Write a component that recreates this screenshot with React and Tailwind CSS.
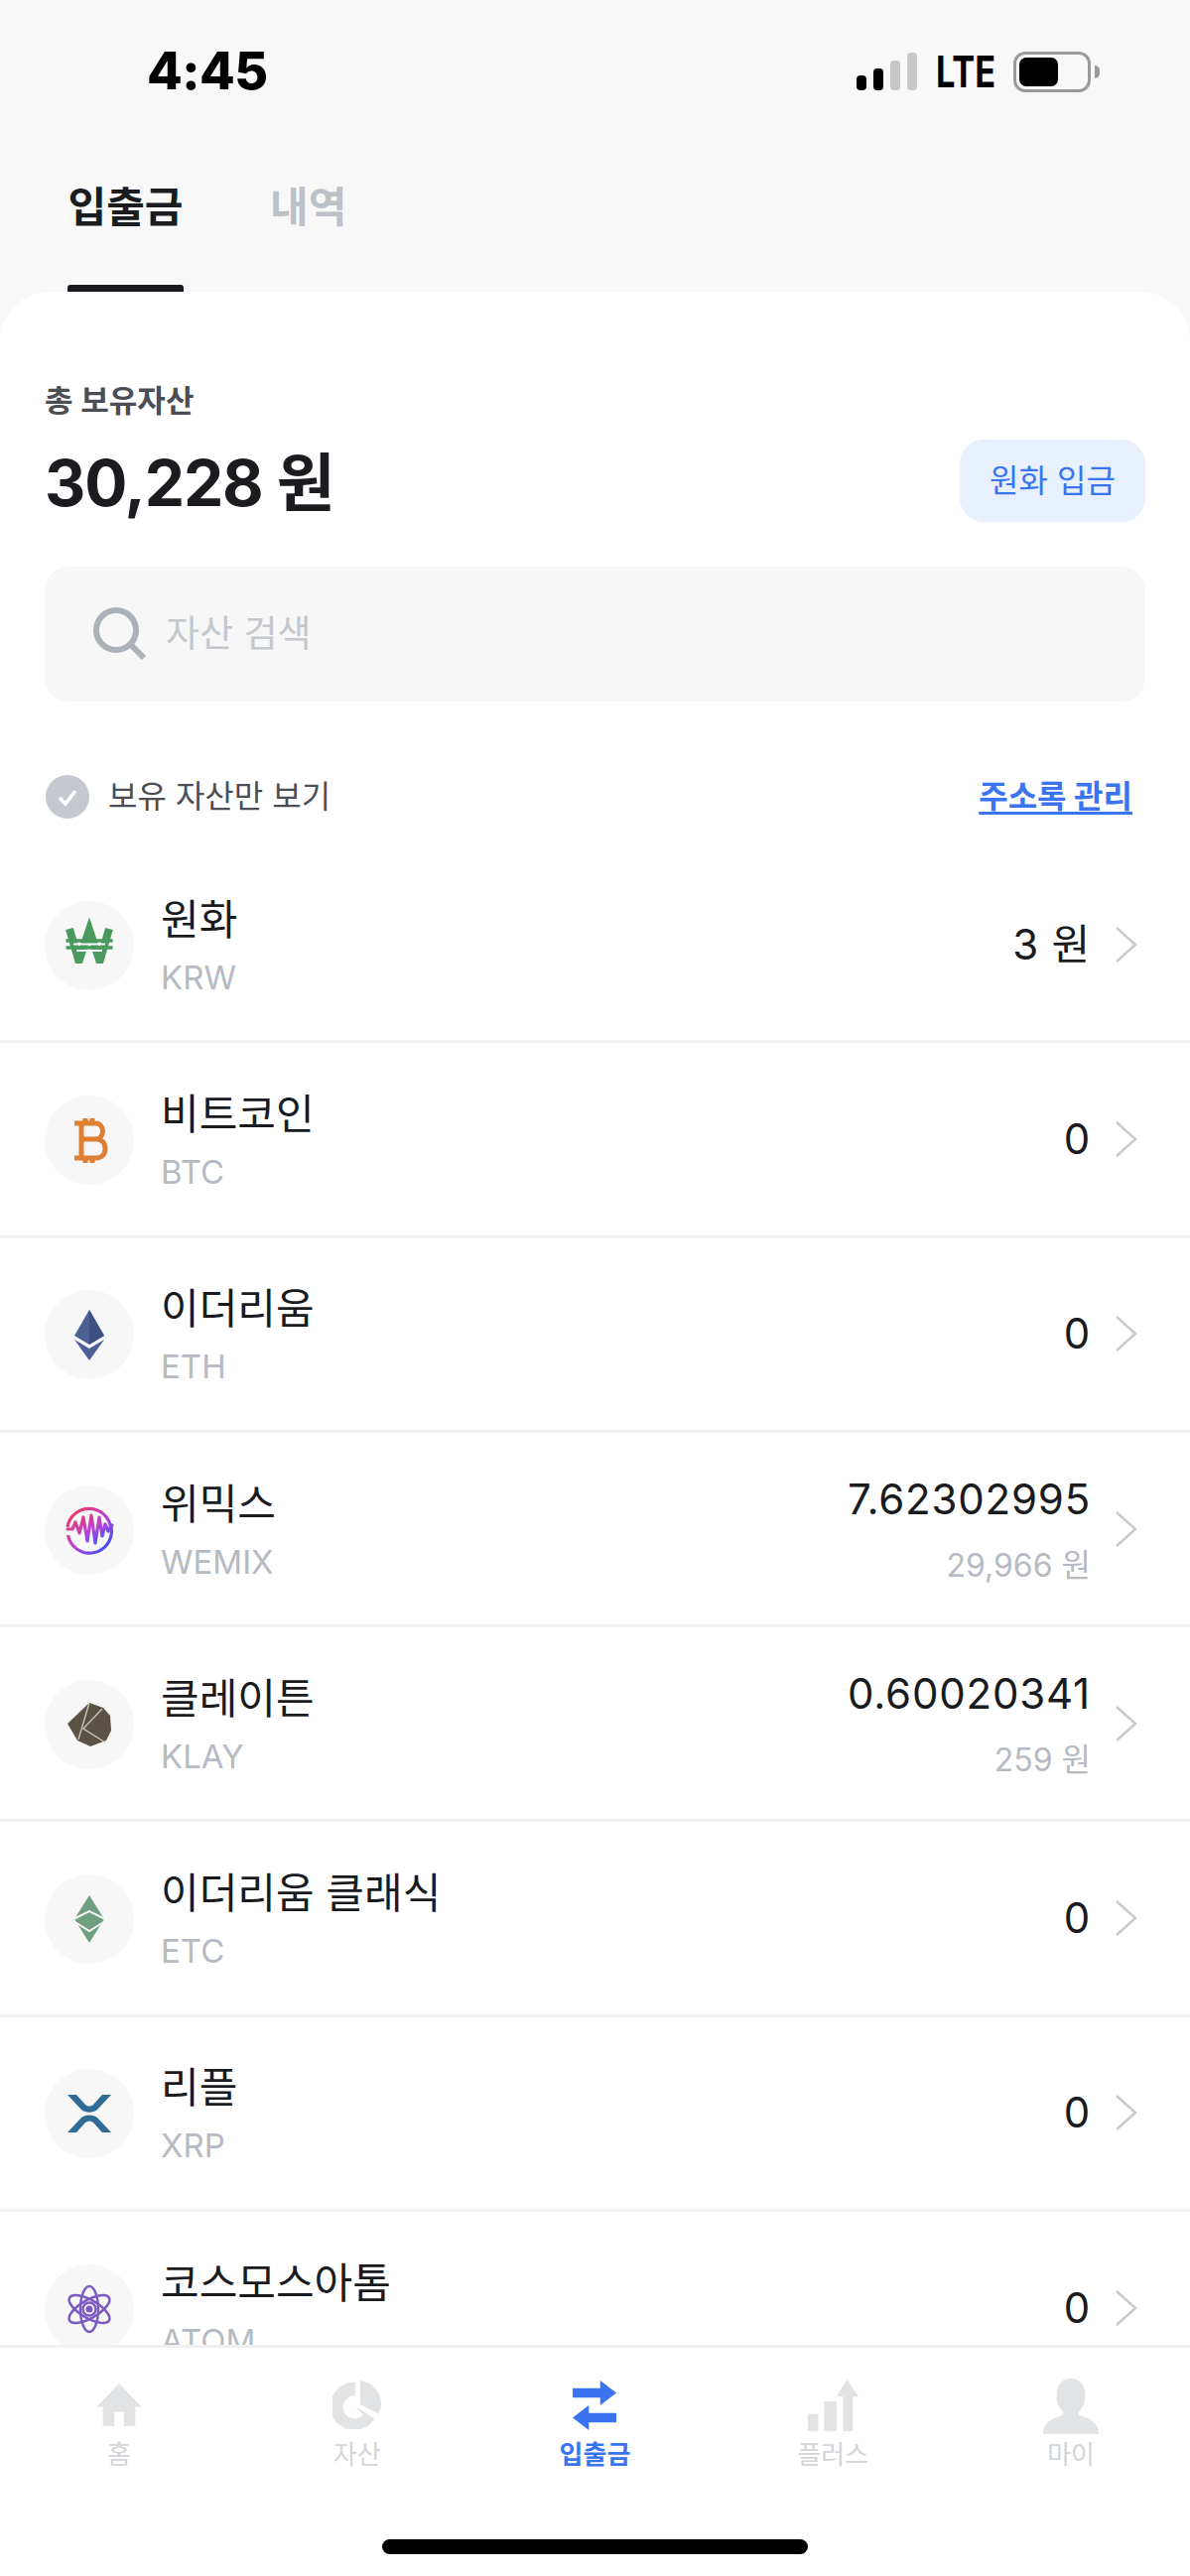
import React from 'react';

const FONT = 'font-["Inter","Noto_Sans_CJK_KR",sans-serif]';

const WonIcon = () => (
  <svg width="60" height="60" viewBox="0 0 60 60">
    <path d="M10 13l9 31h1l10-30 10 30h1l9-31" fill="none" stroke="#4a9a60" strokeWidth="8" />
    <path d="M14 28.500h32M17 35h26" stroke="#f7f7f7" strokeWidth="2" />
    <path d="M6.500 25h47M6.500 32h47" stroke="#4a9a60" strokeWidth="3.500" />
  </svg>
);

const BtcIcon = () => (
  <svg width="60" height="60" viewBox="0 0 60 60">
    <path
      d="M15 13h21c5 0 7.500 4 7.500 8s-2.500 8-7.500 8H22M15 48h22c5.500 0 9-4 9-9.500s-3.500-9.500-9-9.500M22 13v35M26 8v5M33 8v5M26 48v5M33 48v5"
      fill="none"
      stroke="#df7f31"
      strokeWidth="5"
    />
  </svg>
);

const EthIcon = () => (
  <svg width="60" height="60" viewBox="0 0 60 60">
    <path d="M30 5l15 26-15 9-15-9z" fill="#4d6096" />
    <path d="M15 35l15 9 15-9-15 21z" fill="#4d6096" />
    <path d="M30 5v35l15-9z" fill="#3e4f80" />
  </svg>
);

const WemixIcon = () => (
  <svg width="60" height="60" viewBox="0 0 60 60">
    <defs>
      <linearGradient id="wemixRing" x1="0" y1="0" x2="1" y2="1">
        <stop offset="10%" stopColor="#ee3a68" />
        <stop offset="55%" stopColor="#b543d8" />
        <stop offset="90%" stopColor="#3f52f0" />
      </linearGradient>
    </defs>
    <path
      d="M8 27a22 22 0 0 1 43.500 0M8.500 35a22 22 0 0 0 43.500-8"
      fill="none"
      stroke="url(#wemixRing)"
      strokeWidth="3.200"
    />
    <path
      d="M8 29h5l3-7 4 11 4-16 4 24 4-26 4 28 4-26 3 19 3-12 3 7 4-6"
      fill="none"
      stroke="url(#wemixRing)"
      strokeWidth="3.200"
      strokeLinejoin="round"
      strokeLinecap="round"
    />
  </svg>
);

const KlayIcon = () => (
  <svg width="60" height="60" viewBox="0 0 60 60">
    <path d="M30 8l14 5 7 8 1 15-5 10-16 6-13-6-10-17z" fill="#5a5345" />
    <path d="M30 8L19 45M43 14L24 34l22 14" fill="none" stroke="#c8c5bc" strokeWidth="1.400" />
  </svg>
);

const EtcIcon = () => (
  <svg width="60" height="60" viewBox="0 0 60 60">
    <path d="M30 6l15 24-15 24-15-24z" fill="#6f9f7e" />
    <path d="M14 30l16-8 16 8M14 32l16 10 16-10" fill="none" stroke="#f7f7f7" strokeWidth="2" />
  </svg>
);

const XrpIcon = () => (
  <svg width="60" height="60" viewBox="0 0 60 60">
    <path
      d="M8 11h9l9 10c2.500 2 5.500 2 8 0l9-10h9L38 26c-4.500 3.500-11.500 3.500-16 0zM8 49h9l9-10c2.500-2 5.500-2 8 0l9 10h9L38 34c-4.500-3.500-11.500-3.500-16 0z"
      fill="#2f6b94"
    />
  </svg>
);

const AtomIcon = () => (
  <svg width="60" height="60" viewBox="0 0 60 60" fill="none" stroke="#7c5cc0" strokeWidth="2.500">
    <ellipse cx="30" cy="30" rx="9" ry="23" />
    <ellipse cx="30" cy="30" rx="9" ry="23" transform="rotate(60 30 30)" />
    <ellipse cx="30" cy="30" rx="9" ry="23" transform="rotate(-60 30 30)" />
    <circle cx="30" cy="30" r="6.500" />
    <circle cx="30" cy="30" r="3.500" fill="#7c5cc0" stroke="none" />
  </svg>
);

const assets = [
  { name: '원화', code: 'KRW', value: '3 원', icon: WonIcon },
  { name: '비트코인', code: 'BTC', value: '0', icon: BtcIcon },
  { name: '이더리움', code: 'ETH', value: '0', icon: EthIcon },
  { name: '위믹스', code: 'WEMIX', value: '7.62302995', sub: '29,966 원', icon: WemixIcon },
  { name: '클레이튼', code: 'KLAY', value: '0.60020341', sub: '259 원', icon: KlayIcon },
  { name: '이더리움 클래식', code: 'ETC', value: '0', icon: EtcIcon },
  { name: '리플', code: 'XRP', value: '0', icon: XrpIcon },
  { name: '코스모스아톰', code: 'ATOM', value: '0', icon: AtomIcon },
];

function AssetRow({ asset }) {
  const Icon = asset.icon;
  return (
    <div className="flex h-[196.3px] shrink-0 items-center border-b-[3px] border-[#f2f2f3] pl-[45px] pr-[52px]">
      <div className="mt-[2px] flex h-[90px] w-[90px] shrink-0 items-center justify-center rounded-full bg-[#f7f7f7]">
        <Icon />
      </div>
      <div className="ml-[27px] flex flex-1 flex-col">
        <span className="text-[42px] leading-[56px] text-[#1a1b1e]">{asset.name}</span>
        <span className="mt-[10px] text-[33px] leading-[40px] text-[#b6bac2]">{asset.code}</span>
      </div>
      <div className="flex flex-col items-end">
        <span className="text-[42px] leading-[56px] tracking-[0.8px] text-[#1a1b1e]">{asset.value}</span>
        {asset.sub && <span className="mt-[19px] text-[32px] leading-[40px] text-[#b6bac2]">{asset.sub}</span>}
      </div>
      <svg className="ml-[24px] shrink-0" width="24" height="38" viewBox="0 0 24 38">
        <path d="M2 2l19 17L2 36" fill="none" stroke="#c6c9cf" strokeWidth="2.400" />
      </svg>
    </div>
  );
}

function NavItem({ label, active, children }) {
  return (
    <div className="flex flex-col items-center">
      <div className="flex h-[54px] items-end justify-center">{children}</div>
      <span className={active ? 'mt-[6px] text-[26px] leading-[36px] font-bold text-[#3a74f0]' : 'mt-[6px] text-[26px] leading-[36px] text-[#d3d5d9]'}>
        {label}
      </span>
    </div>
  );
}

export default function App() {
  return (
    <div className={`flex h-[2596px] w-[1199px] flex-col overflow-hidden bg-[#f8f8f8] ${FONT}`}>
      {/* status bar */}
      <div className="flex h-[144px] shrink-0 items-start justify-between pt-[42px] pl-[148px] pr-[91px]">
        <span className="text-[52px] leading-[60px] font-extrabold tracking-[-0.6px] text-black">4:45</span>
        <div className="mt-[8px] flex items-center">
          <div className="flex items-end gap-[7px]">
            <div className="h-[15px] w-[10px] rounded-[4px] bg-black" />
            <div className="h-[22px] w-[10px] rounded-[4px] bg-black" />
            <div className="h-[30px] w-[10px] rounded-[4px] bg-[#c7c7c7]" />
            <div className="h-[38px] w-[10px] rounded-[4px] bg-[#c7c7c7]" />
          </div>
          <div className="ml-[19px] w-[60px]">
            <span className="block origin-left scale-x-[0.78] text-[44px] leading-[44px] font-bold whitespace-nowrap text-black">LTE</span>
          </div>
          <div className="ml-[18px] flex h-[41px] w-[78px] items-center rounded-[12px] border-[3px] border-[#9a9a9a] p-[3px]">
            <div className="h-full w-[39px] rounded-[7px] bg-black" />
          </div>
          <div className="ml-[4px] h-[13px] w-[5px] rounded-r-full bg-[#9a9a9a]" />
        </div>
      </div>

      {/* tabs */}
      <div className="flex h-[150px] shrink-0 items-end gap-[87px] pl-[68px]">
        <div className="flex h-full w-[117px] flex-col items-center justify-between">
          <span className="mt-[38px] text-[42px] leading-[54px] font-bold whitespace-nowrap text-[#1b1c20]">입출금</span>
          <div className="h-[7px] w-full rounded-t-[3px] bg-[#1b1c20]" />
        </div>
        <div className="h-full">
          <div className="mt-[38px] text-[42px] leading-[54px] font-bold text-[#bcc0c7]">내역</div>
        </div>
      </div>

      {/* sheet */}
      <div className="flex min-h-0 flex-1 flex-col overflow-hidden rounded-t-[50px] bg-white">
        <div className="shrink-0 px-[45px]">
          <div className="mt-[90px] text-[31px] leading-[40px] font-semibold text-[#4b4e55]">총 보유자산</div>
          <div className="mt-[19px] flex h-[83px] items-center justify-between">
            <span className="pt-[5px] text-[64px] leading-[80px] font-bold tracking-[-1.1px] text-[#1b1c20]">30,228 원</span>
            <div className="flex h-[83px] w-[187px] items-center justify-center rounded-[24px] bg-[#e8f0fd] text-[32px] text-[#3a74f0]">
              원화 입금
            </div>
          </div>
          <div className="mt-[45px] flex h-[136px] items-center rounded-[24px] bg-[#f7f7f7] pl-[48px]">
            <svg width="56" height="56" viewBox="0 0 56 56">
              <circle cx="24" cy="24" r="20" fill="none" stroke="#adb1b9" strokeWidth="6" />
              <path d="M38 38l14 14" stroke="#adb1b9" strokeWidth="6" />
            </svg>
            <span className="ml-[18px] text-[37px] text-[#c4c7cc]">자산 검색</span>
          </div>
          <div className="mt-[72px] flex h-[48px] items-center justify-between pr-[13px]">
            <div className="flex items-center">
              <div className="ml-[1px] flex h-[44px] w-[44px] items-center justify-center rounded-full bg-[#c5c8ce]">
                <svg width="26" height="26" viewBox="0 0 26 26">
                  <path d="M5 14l6 6L21 7" fill="none" stroke="#fff" strokeWidth="3.500" />
                </svg>
              </div>
              <span className="ml-[19px] text-[32px] text-[#4b4e55]">보유 자산만 보기</span>
            </div>
            <span className="text-[32px] font-bold text-[#3a74f0] underline underline-offset-4">주소록 관리</span>
          </div>
        </div>
        <div className="mt-[28px] flex min-h-0 flex-1 flex-col overflow-hidden">
          {assets.map((a) => (
            <AssetRow key={a.code} asset={a} />
          ))}
        </div>
      </div>

      {/* bottom nav */}
      <div className="flex h-[233px] shrink-0 flex-col border-t-[3px] border-[#f0f0f3] bg-white">
        <div className="mt-[30px] grid grid-cols-5">
          <NavItem label="홈">
            <svg className="mb-[5px]" width="48" height="44" viewBox="0 0 50 46" fill="#e2e3e5">
              <path d="M25 1L1 26h7v20h12V31h10v15h12V26h7z" />
            </svg>
          </NavItem>
          <NavItem label="자산">
            <svg className="mb-[2px]" width="50" height="50" viewBox="0 0 52 52" fill="#e2e3e5">
              <path d="M29 1a25 25 0 0 1 22 25c0 3-1 7-3 10L29 26z" />
              <path d="M24 3v25l20 13A25 25 0 1 1 24 3zm0 14a12 12 0 1 0 8 20L24 28z" fillRule="evenodd" />
            </svg>
          </NavItem>
          <NavItem label="입출금" active>
            <svg width="46" height="52" viewBox="0 0 48 52" fill="#3a74f0">
              <path d="M1 8h29V0l17 13-17 13v-8H1zM47 34H18v-8L1 39l17 13v-8h29z" />
            </svg>
          </NavItem>
          <NavItem label="플러스">
            <svg width="54" height="52" viewBox="0 0 54 54" fill="#e2e3e5">
              <rect x="1" y="36" width="11" height="18" />
              <rect x="18" y="23" width="13" height="31" />
              <path d="M38 54V18h-7L42 0l12 18h-6v36z" />
            </svg>
          </NavItem>
          <NavItem label="마이">
            <svg className="-mb-[3px]" width="56" height="56" viewBox="0 0 58 58" fill="#e2e3e5">
              <path d="M29 0c10 0 15 8 15 17 0 8-3 14-7 18v3c9 3 21 6 21 20H0c0-14 12-17 21-20v-3c-4-4-7-10-7-18C14 8 19 0 29 0z" />
            </svg>
          </NavItem>
        </div>
        <div className="mt-auto mb-[22px] h-[15px] w-[429px] self-center rounded-full bg-black" />
      </div>
    </div>
  );
}
